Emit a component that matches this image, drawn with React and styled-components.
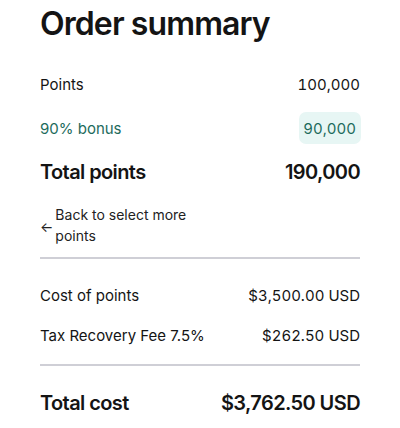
import React from 'react';
import styled, { createGlobalStyle } from 'styled-components';

const GlobalStyle = createGlobalStyle`
  body {
    margin: 0;
    background: #ffffff;
    font-family: Inter, "Liberation Sans", sans-serif;
    color: #141414;
  }
`;

const Panel = styled.div`
  width: 400px;
  padding: 4px 40px 0;
  box-sizing: border-box;
`;

const Title = styled.h1`
  margin: 0 0 24px;
  font-size: 32px;
  line-height: 40px;
  font-weight: 600;
  letter-spacing: -0.9px;
`;

const Lines = styled.div`
  display: flex;
  flex-direction: column;
  gap: ${(p) => p.gap || 12}px;
`;

const Row = styled.div`
  display: flex;
  align-items: center;
  justify-content: space-between;
  height: 32px;
  font-size: ${(p) => (p.big ? 20 : 15)}px;
  font-weight: ${(p) => (p.big ? 600 : 400)};
  letter-spacing: ${(p) => (p.big ? '-0.6px' : '0')};
  color: ${(p) => (p.accent ? '#1d6b5c' : 'inherit')};
`;

const Amount = styled.span`
  font-variant-numeric: tabular-nums;
`;

const Badge = styled.span`
  display: inline-flex;
  align-items: center;
  height: 32px;
  padding: 0 5px 0 4px;
  margin-right: -1px;
  border-radius: 7px;
  background: #e7f6f4;
  font-variant-numeric: tabular-nums;
`;

const BackLink = styled.a`
  display: flex;
  align-items: center;
  gap: 2px;
  width: 160px;
  margin: 16px 0 11px;
  font-size: 14px;
  line-height: 21px;
  color: #222;
  text-decoration: none;
  cursor: pointer;
`;

const Arrow = styled.span`
  font-size: 14px;
  margin-top: 2px;
`;

const Divider = styled.hr`
  margin: 0;
  border: 0;
  height: 2px;
  background: #cfcfd6;
`;

const Section = styled.div`
  margin: ${(p) => p.top}px 0 ${(p) => p.bottom}px;
`;

export default function App() {
  return (
    <>
      <GlobalStyle />
      <Panel>
        <Title>Order summary</Title>
        <Lines>
          <Row>
            <span>Points</span>
            <Amount>100,000</Amount>
          </Row>
          <Row accent>
            <span>90% bonus</span>
            <Badge>90,000</Badge>
          </Row>
          <Row big>
            <span>Total points</span>
            <span>190,000</span>
          </Row>
        </Lines>
        <BackLink>
          <Arrow>←</Arrow>
          <span>Back to select more points</span>
        </BackLink>
        <Divider />
        <Section top={20} bottom={13}>
          <Lines gap={8}>
            <Row>
              <span>Cost of points</span>
              <Amount>$3,500.00 USD</Amount>
            </Row>
            <Row>
              <span>Tax Recovery Fee 7.5%</span>
              <Amount>$262.50 USD</Amount>
            </Row>
          </Lines>
        </Section>
        <Divider />
        <Section top={21} bottom={0}>
          <Row big>
            <span>Total cost</span>
            <span>$3,762.50 USD</span>
          </Row>
        </Section>
      </Panel>
    </>
  );
}
